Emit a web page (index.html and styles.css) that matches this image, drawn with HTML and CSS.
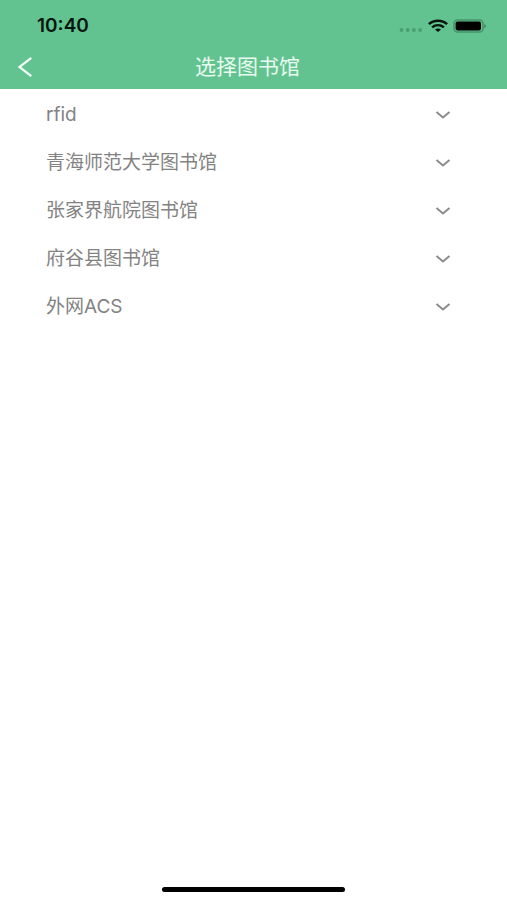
FILE: index.html
```
<!DOCTYPE html>
<html lang="zh-CN">
<head>
<meta charset="utf-8">
<meta name="viewport" content="width=device-width, initial-scale=1">
<title>选择图书馆</title>
<link rel="stylesheet" href="styles.css">
</head>
<body>
<header class="header">
  <div class="status">
    <time class="clock">10:40</time>
    <div class="indicators">
      <svg class="signal" width="24" height="16" viewBox="0 0 24 16" aria-hidden="true"><g fill="#4a9f72"><circle cx="2.5" cy="12" r="1.9"/><circle cx="8.7" cy="12" r="1.9"/><circle cx="14.9" cy="12" r="1.9"/><circle cx="21.1" cy="12" r="1.9"/></g></svg>
      <svg width="20" height="16" viewBox="0 0 20 16" aria-hidden="true"><g fill="none" stroke="#06150d" stroke-width="2.5"><path d="M.9 6.1C6 1.5 14 1.5 19.1 6.1"/><path d="M4.1 9.4C7.6 6.5 12.4 6.5 15.9 9.4"/></g><path d="M7 11.5C8.8 10 11.2 10 13 11.5L10 14Z" fill="#06150d"/></svg>
      <svg width="34" height="16" viewBox="0 0 34 16" aria-hidden="true"><rect x="1" y="2" width="29" height="12" rx="3.5" fill="none" stroke="#469468" stroke-width="1.6"/><rect x="2.6" y="3.6" width="25.4" height="8.8" rx="1.8" fill="#000"/><path d="M31.3 6.2C33.5 6.8 33.5 9.4 31.3 10Z" fill="#3c825b"/></svg>
    </div>
  </div>
  <div class="navbar">
    <button class="back" type="button" aria-label="返回"><svg width="16" height="22" viewBox="0 0 16 22" aria-hidden="true"><path d="M13.3 1.8L1.6 11L13.3 20.2" fill="none" stroke="#f4fff8" stroke-width="2.2"/></svg></button>
    <h1 class="title">选择图书馆</h1>
  </div>
</header>
<main class="list">
  <button class="row" type="button"><span>rfid</span><svg class="chevron" viewBox="0 0 16 10" aria-hidden="true"><path d="M1.5 2L8 7.5L14.5 2"/></svg></button>
  <button class="row" type="button"><span>青海师范大学图书馆</span><svg class="chevron" viewBox="0 0 16 10" aria-hidden="true"><path d="M1.5 2L8 7.5L14.5 2"/></svg></button>
  <button class="row" type="button"><span>张家界航院图书馆</span><svg class="chevron" viewBox="0 0 16 10" aria-hidden="true"><path d="M1.5 2L8 7.5L14.5 2"/></svg></button>
  <button class="row" type="button"><span>府谷县图书馆</span><svg class="chevron" viewBox="0 0 16 10" aria-hidden="true"><path d="M1.5 2L8 7.5L14.5 2"/></svg></button>
  <button class="row" type="button"><span>外网ACS</span><svg class="chevron" viewBox="0 0 16 10" aria-hidden="true"><path d="M1.5 2L8 7.5L14.5 2"/></svg></button>
</main>
<footer class="footer"><div class="home"></div></footer>
</body>
</html>
```
FILE: styles.css
```
* {
  box-sizing: border-box;
}

body {
  margin: 0;
  min-height: 100vh;
  display: flex;
  flex-direction: column;
  background: #fff;
  font-family: Inter, "Noto Sans CJK SC", sans-serif;
}

button {
  border: 0;
  padding: 0;
  background: none;
  font: inherit;
  text-align: left;
}

.header {
  background: #62c391;
}

.status {
  height: 45px;
  padding: 6px 20px 0 37px;
  display: flex;
  align-items: center;
  justify-content: space-between;
}

.clock {
  color: #06150d;
  font-size: 19px;
  font-weight: 600;
}

.indicators {
  display: flex;
  align-items: center;
  gap: 5px;
}

.signal {
  margin-top: 1px;
}

.navbar {
  height: 44px;
  padding: 0 18px;
  display: grid;
  grid-template-columns: 28px 1fr 40px;
  align-items: center;
}

.back {
  display: flex;
}

.title {
  margin: 0;
  color: #e9faf0;
  font-size: 21px;
  font-weight: 400;
  line-height: 28px;
  text-align: center;
}

.list {
  flex: 1;
  padding-top: 1px;
}

.row {
  width: 100%;
  height: 48px;
  padding: 1px 56px 0 46px;
  display: flex;
  align-items: center;
  justify-content: space-between;
  color: #838383;
  font-size: 19px;
  line-height: 24px;
}

.chevron {
  width: 16px;
  height: 10px;
  fill: none;
  stroke: #8b8b8b;
  stroke-width: 2;
}

.footer {
  padding: 0 32% 8px;
}

.home {
  height: 5px;
  border-radius: 3px;
  background: #000;
}
```
